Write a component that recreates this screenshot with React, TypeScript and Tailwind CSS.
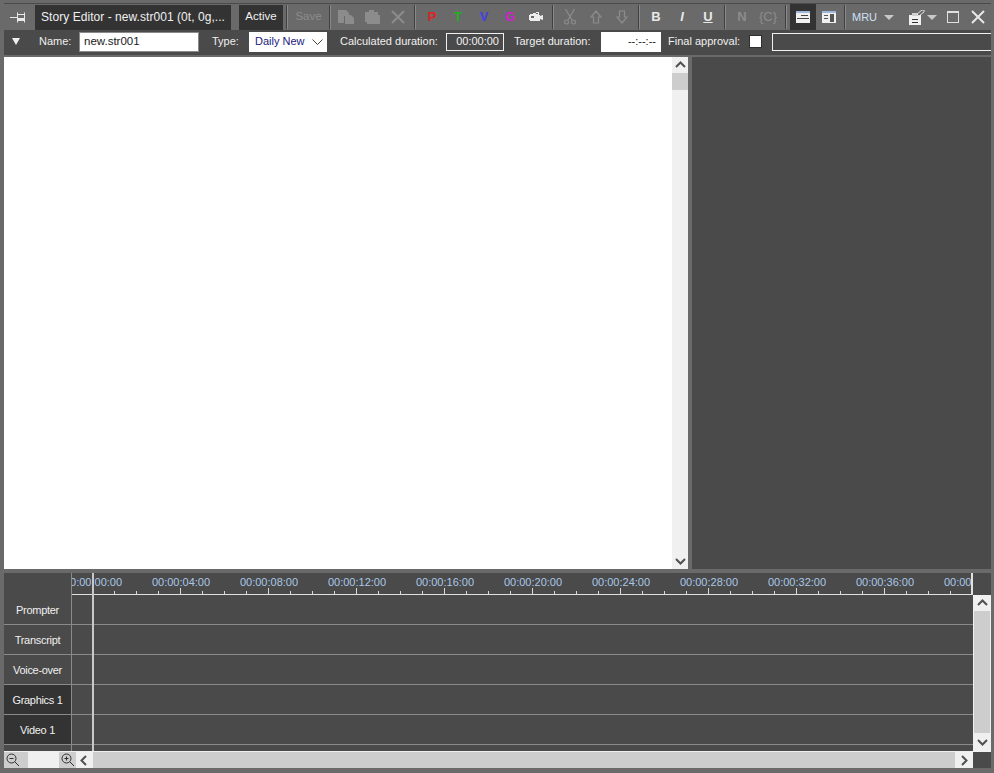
const rulerLabels = ["00:00:00:00", "00:00:04:00", "00:00:08:00", "00:00:12:00", "00:00:16:00", "00:00:20:00", "00:00:24:00", "00:00:28:00", "00:00:32:00", "00:00:36:00", "00:00:40:00"];
const tracks = [
  { name: "Prompter", active: false },
  { name: "Transcript", active: false },
  { name: "Voice-over", active: false },
  { name: "Graphics 1", active: true },
  { name: "Video 1", active: true },
];

function Sep({ className = "" }: { className?: string }) {
  return <div className={"h-[24px] w-[2px] shrink-0 border-l border-[#3f3f3f] bg-[#8a8a8a] " + className} />;
}

function Slot({ children, className = "" }: { children: React.ReactNode; className?: string }) {
  return <div className={"flex h-[26px] w-[26px] shrink-0 items-center justify-center " + className}>{children}</div>;
}

function Letter({ children, color, className = "" }: { children: React.ReactNode; color: string; className?: string }) {
  return <span className={"font-['Liberation_Sans'] text-[13px] font-bold " + color + " " + className}>{children}</span>;
}

function Chevron({ dir }: { dir: "up" | "down" | "left" | "right" }) {
  const pts = { up: "1,7 5.5,2.5 10,7", down: "1,3 5.5,7.5 10,3", left: "7,1 2.5,5.5 7,10", right: "3,1 7.5,5.5 3,10" }[dir];
  return (
    <svg width="11" height="11" viewBox="0 0 11 11" fill="none" stroke="#505050" strokeWidth="2">
      <polyline points={pts} />
    </svg>
  );
}

function Caret() {
  return (
    <svg width="10" height="5" viewBox="0 0 10 5" fill="#c8c8c8">
      <polygon points="0,0 10,0 5,5" />
    </svg>
  );
}

function Ruler() {
  const ticks = [];
  for (let i = 0; i < 41; i++) {
    const x = 20 + i * 22;
    ticks.push(<line key={i} x1={x + 0.5} x2={x + 0.5} y1={i % 4 === 0 ? 15 : 18} y2={21} stroke="#d8d8d8" />);
  }
  return (
    <svg width="901" height="22" viewBox="0 0 901 22" className="absolute left-0 top-0">
      {ticks}
      <line x1="0" x2="901" y1="21.5" y2="21.5" stroke="#e0e0e0" />
      <line x1="900" x2="900" y1="0" y2="22" stroke="#e0e0e0" strokeWidth="2" />
    </svg>
  );
}

export default function App() {
  return (
    <div className="flex h-[773px] w-[994px] flex-col overflow-hidden bg-[#6a6a6a] pl-[4px] pr-[3px] pb-[5px] pt-[3px] font-['Liberation_Sans',sans-serif] text-[11px] text-[#f0f0f0]">
      {/* Toolbar */}
      <div className="flex h-[27px] shrink-0 items-center border-t border-[#4a4a4a]">
        <div className="flex h-[26px] w-[31px] shrink-0 items-center justify-center pr-[4px]">
          <svg width="16" height="12" viewBox="0 0 16 12" fill="none" stroke="#e8e8e8">
            <path d="M0 6.5h7M7.5 1.5v10M7.5 3.5h7v6h-7M14.5 1.5v10" />
            <path d="M8 8h6" strokeWidth="2" />
          </svg>
        </div>
        <div className="flex h-[25px] w-[196px] shrink-0 items-center bg-[#333333] pl-[6px] text-[12px] tracking-[0.05px]">Story Editor - new.str001 (0t, 0g,...</div>
        <div className="ml-[8px] flex h-[25px] w-[44px] shrink-0 items-center justify-center bg-[#333333] text-[11.5px]">Active</div>
        <Sep className="ml-[3px]" />
        <div className="w-[41px] shrink-0 text-center text-[11.5px] text-[#8c8c8c]">Save</div>
        <Sep className="mr-[2px]" />
        <Slot>
          <svg width="16" height="14" viewBox="0 0 16 14" fill="#8c8c8c">
            <path d="M0 0h8l3 3v3H6v7H0z" />
            <path d="M7 5h6l3 3v6H7z" />
          </svg>
        </Slot>
        <Slot>
          <svg width="16" height="14" viewBox="0 0 16 14" fill="#8c8c8c">
            <path d="M1 2h4V0h5v2h4v3h2v9H3v-2H1z" />
          </svg>
        </Slot>
        <Slot>
          <svg width="14" height="14" viewBox="0 0 14 14" stroke="#8c8c8c" strokeWidth="2">
            <path d="M1 1l12 12M13 1L1 13" />
          </svg>
        </Slot>
        <Sep className="mx-[3px]" />
        <Slot><Letter color="text-[#e02020]">P</Letter></Slot>
        <Slot><Letter color="text-[#20b020]">T</Letter></Slot>
        <Slot><Letter color="text-[#4040e8]">V</Letter></Slot>
        <Slot><Letter color="text-[#d020d0]">G</Letter></Slot>
        <Slot>
          <svg width="14" height="11" viewBox="0 0 14 11" fill="#ececec">
            <path d="M0 3h1V2h3V1h3V0h3v3h1v1l3-1v5l-3-1v2H1V8H0z" />
            <path d="M2 4h3v2H2zM7 1h2v1H7z" fill="#686868" />
          </svg>
        </Slot>
        <Sep className="mx-[3px]" />
        <Slot>
          <svg width="12" height="16" viewBox="0 0 12 16" fill="none" stroke="#8c8c8c" strokeWidth="1.2">
            <path d="M1.5 0l6.5 11M10.5 0L4 11" />
            <circle cx="2.5" cy="13" r="2" />
            <circle cx="9.5" cy="13" r="2" />
          </svg>
        </Slot>
        <Slot>
          <svg width="12" height="14" viewBox="0 0 12 14" fill="none" stroke="#8c8c8c" strokeWidth="1.2">
            <path d="M6 1l5 6H8.5v6h-5V7H1z" />
          </svg>
        </Slot>
        <Slot>
          <svg width="12" height="14" viewBox="0 0 12 14" fill="none" stroke="#8c8c8c" strokeWidth="1.2">
            <path d="M6 13l5-6H8.5V1h-5v6H1z" />
          </svg>
        </Slot>
        <Sep className="mx-[3px]" />
        <Slot><Letter color="text-[#e8e8e8]">B</Letter></Slot>
        <Slot><Letter color="text-[#e8e8e8]" className="italic">I</Letter></Slot>
        <Slot><Letter color="text-[#e8e8e8]" className="underline">U</Letter></Slot>
        <Sep className="mx-[3px]" />
        <Slot><Letter color="text-[#8c8c8c]">N</Letter></Slot>
        <Slot><Letter color="text-[#8c8c8c]" className="font-normal">{"{C}"}</Letter></Slot>
        <Sep className="ml-[4px] mr-[3px]" />
        <Slot className="bg-[#333333]">
          <svg width="14" height="12" viewBox="0 0 14 12">
            <path d="M0 0h14v12H0z" fill="#f0f0f0" />
            <path d="M0 0h14v2H0z" fill="#9db8d8" />
            <path d="M1 7h12v1H1zM5 4h7v1H5z" fill="#444444" />
          </svg>
        </Slot>
        <Slot>
          <svg width="14" height="12" viewBox="0 0 14 12">
            <path d="M0 0h14v12H0z" fill="#f0f0f0" />
            <path d="M0 0h14v2H0z" fill="#9db8d8" />
            <path d="M8 3h4v8H8zM2 4h4v1H2zM2 7h4v1H2z" fill="#555555" />
          </svg>
        </Slot>
        <Sep className="ml-[2px]" />
        <div className="ml-[6px] w-[27px] shrink-0 text-[#cfe0f5]">MRU</div>
        <div className="ml-[5px] flex w-[10px] shrink-0 justify-center"><Caret /></div>
        <div className="ml-[15px] flex w-[16px] shrink-0 justify-center">
          <svg width="16" height="15" viewBox="0 0 16 15">
            <path d="M0 5h12v10H0z" fill="#f0f0f0" />
            <path d="M3 3h6v3H3z" fill="#d0d0d0" />
            <path d="M8 4l5-4h2v2l-5 4z" fill="none" stroke="#e0e0e0" />
            <path d="M3 9h6v1H3zM3 12h6v1H3z" fill="#333333" />
          </svg>
        </div>
        <div className="ml-[2px] flex w-[10px] shrink-0 justify-center"><Caret /></div>
        <div className="ml-[10px] h-[12px] w-[12px] shrink-0 border border-t-2 border-[#e0e0e0]" />
        <svg width="14" height="14" viewBox="0 0 14 14" stroke="#e8e8e8" strokeWidth="2" className="ml-[12px] shrink-0">
          <path d="M1 1l12 12M13 1L1 13" />
        </svg>
      </div>

      {/* Story properties */}
      <div className="flex h-[25px] shrink-0 items-center overflow-hidden bg-[#4a4a4a] pb-[2px]">
        <svg width="8" height="7" viewBox="0 0 8 7" fill="#f0f0f0" className="ml-[8px] shrink-0">
          <polygon points="0,0 8,0 4,7" />
        </svg>
        <span className="ml-[19px] w-[40px] shrink-0">Name:</span>
        <div className="flex h-[20px] w-[120px] shrink-0 items-center border border-[#8a8a8a] bg-white pl-[4px] text-[11.5px] text-[#1a1a1a]">new.str001</div>
        <span className="ml-[13px] w-[37px] shrink-0">Type:</span>
        <div className="flex h-[20px] w-[78px] shrink-0 items-center justify-between bg-white pl-[6px] pr-[4px] text-[#1a1a80]">
          Daily New
          <svg width="11" height="6" viewBox="0 0 11 6" fill="none" stroke="#444444"><path d="M0.5 0.5l5 5 5-5" /></svg>
        </div>
        <span className="ml-[13px] w-[106px] shrink-0">Calculated duration:</span>
        <div className="flex h-[18px] w-[58px] shrink-0 items-center justify-end border border-[#f0f0f0] pr-[4px]">00:00:00</div>
        <span className="ml-[10px] w-[87px] shrink-0">Target duration:</span>
        <div className="flex h-[20px] w-[60px] shrink-0 items-center justify-end bg-white pr-[5px] text-[#1a1a1a]">--:--:--</div>
        <span className="ml-[7px] w-[81px] shrink-0">Final approval:</span>
        <div className="h-[13px] w-[13px] shrink-0 border border-[#303030] bg-white" />
        <div className="ml-[10px] h-[18px] w-[240px] shrink-0 border border-[#f0f0f0]" />
      </div>

      {/* Editor area */}
      <div className="mt-[2px] flex min-h-0 flex-1">
        <div className="flex-1 bg-white" />
        <div className="flex w-[16px] flex-col bg-[#f0f0f0]">
          <div className="flex h-[16px] items-center justify-center"><Chevron dir="up" /></div>
          <div className="h-[17px] bg-[#cdcdcd]" />
          <div className="flex-1" />
          <div className="flex h-[16px] items-center justify-center"><Chevron dir="down" /></div>
        </div>
        <div className="ml-[4px] w-[299px] bg-[#4a4a4a]" />
      </div>

      {/* Timeline */}
      <div className="mt-[4px] flex h-[195px] shrink-0 flex-col bg-[#4a4a4a]">
        <div className="flex min-h-0 flex-1">
          <div className="flex w-[67px] shrink-0 flex-col">
            <div className="h-[22px]" />
            {tracks.map((t) => (
              <div key={t.name} className={"flex h-[30px] items-center justify-center border-b border-[#8a8a8a] pt-[1px] tracking-[-0.3px] " + (t.active ? "bg-[#333333]" : "")}>
                {t.name}
              </div>
            ))}
          </div>
          <div className="relative flex-1 overflow-hidden border-l border-[#8a8a8a]">
            <div className="relative h-[22px] w-[901px] overflow-hidden">
              <div className="ml-[-23px] flex w-[968px] pt-[1px] text-[#a9c8e8]">
                {rulerLabels.map((l) => (
                  <span key={l} className="w-[88px] shrink-0 text-center">{l}</span>
                ))}
              </div>
              <Ruler />
            </div>
            {tracks.map((t) => (
              <div key={t.name} className="h-[30px] border-b border-[#8a8a8a]" />
            ))}
            <div className="absolute bottom-0 left-[20px] top-0 w-[2px] bg-[#c8c8c8]" />
          </div>
          <div className="flex w-[18px] shrink-0 flex-col pt-[22px]">
            <div className="flex h-[16px] items-center justify-center bg-[#f0f0f0]"><Chevron dir="up" /></div>
            <div className="flex-1 border-x border-[#f0f0f0] bg-[#cdcdcd]" />
            <div className="flex h-[18px] items-center justify-center bg-[#f0f0f0]"><Chevron dir="down" /></div>
          </div>
        </div>
        <div className="flex h-[17px] shrink-0 border-t border-[#f0f0f0]">
          <div className="flex w-[24px] items-center bg-[#cdcdcd] pl-[2px]">
            <svg width="14" height="14" viewBox="0 0 14 14" fill="none" stroke="#303030">
              <circle cx="5.5" cy="5.5" r="4.5" />
              <path d="M3.5 5.5h4M9 9l4 4" />
            </svg>
          </div>
          <div className="w-[31px] bg-[#f0f0f0]" />
          <div className="flex w-[17px] items-center justify-center bg-[#cdcdcd]">
            <svg width="14" height="14" viewBox="0 0 14 14" fill="none" stroke="#303030">
              <circle cx="5.5" cy="5.5" r="4.5" />
              <path d="M3.5 5.5h4M5.5 3.5v4M9 9l4 4" />
            </svg>
          </div>
          <div className="flex w-[17px] items-center justify-center bg-[#f0f0f0]"><Chevron dir="left" /></div>
          <div className="flex-1 bg-[#cdcdcd]" />
          <div className="flex w-[18px] items-center justify-center bg-[#f0f0f0]"><Chevron dir="right" /></div>
          <div className="w-[18px] bg-[#4a4a4a]" />
        </div>
      </div>
    </div>
  );
}
